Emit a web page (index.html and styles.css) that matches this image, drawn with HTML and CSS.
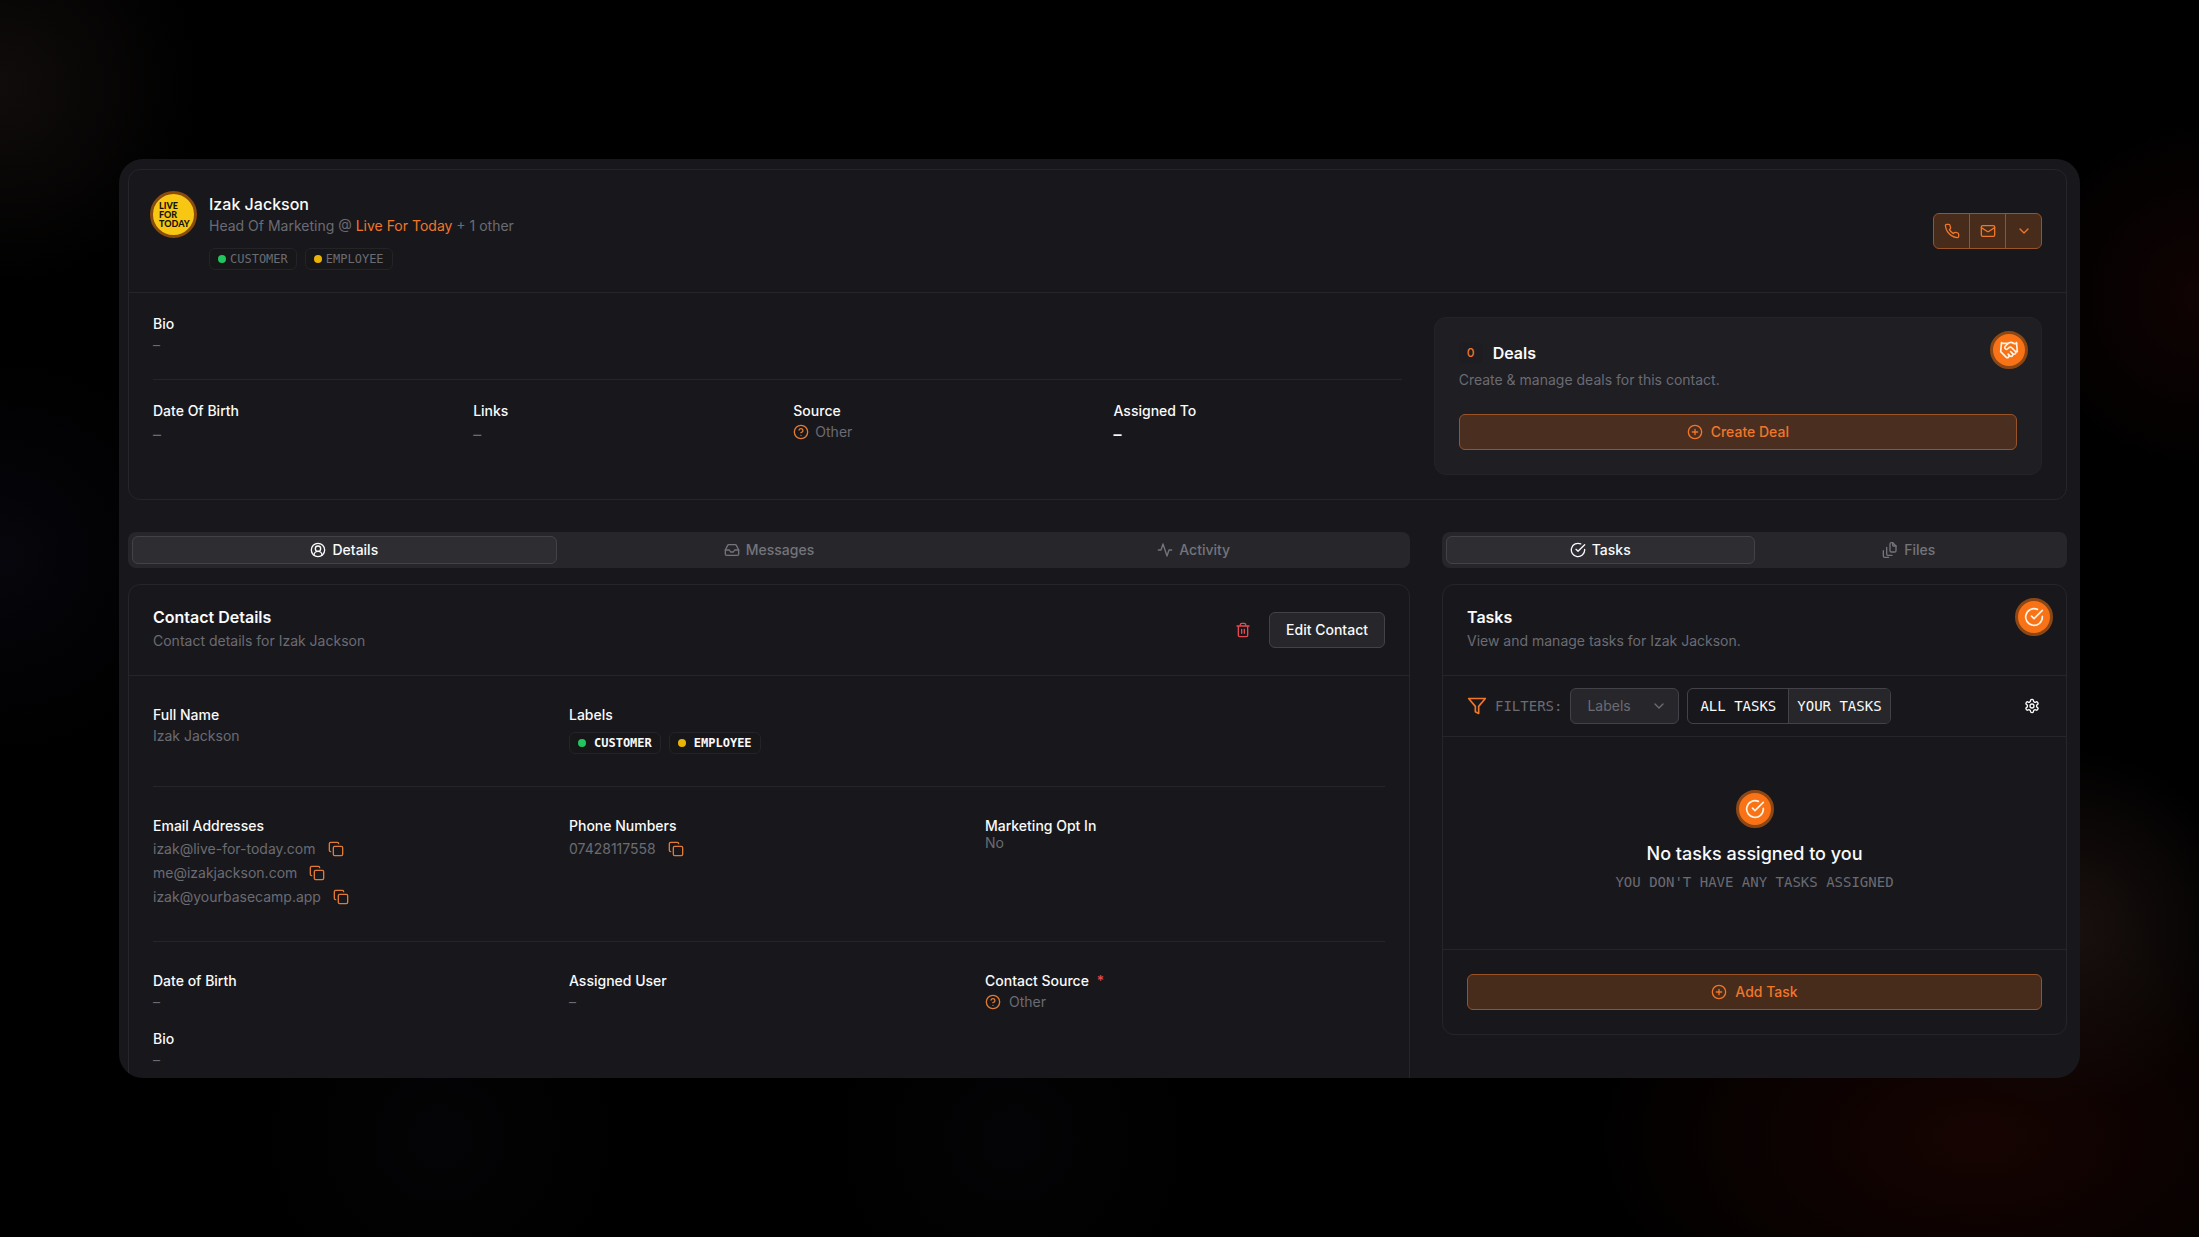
FILE: index.html
```html
<!DOCTYPE html>
<html lang="en">
<head>
    <meta charset="UTF-8">
    <meta name="viewport" content="width=device-width, initial-scale=1.0">
    <title>Izak Jackson - Contact</title>
    <link rel="stylesheet" href="styles.css">
</head>
<body>
    <!-- Icon set -->
    <svg class="sprite" aria-hidden="true">
        <symbol id="i-phone" viewBox="0 0 24 24"><path d="M22 16.92v3a2 2 0 0 1-2.18 2 19.79 19.79 0 0 1-8.63-3.07 19.5 19.5 0 0 1-6-6 19.79 19.79 0 0 1-3.07-8.67A2 2 0 0 1 4.11 2h3a2 2 0 0 1 2 1.72 12.84 12.84 0 0 0 .7 2.81 2 2 0 0 1-.45 2.11L8.09 9.91a16 16 0 0 0 6 6l1.27-1.27a2 2 0 0 1 2.11-.45 12.84 12.84 0 0 0 2.81.7A2 2 0 0 1 22 16.92z"/></symbol>
        <symbol id="i-mail" viewBox="0 0 24 24"><rect x="2" y="4" width="20" height="16" rx="2"/><path d="m22 7-8.97 5.7a1.94 1.94 0 0 1-2.06 0L2 7"/></symbol>
        <symbol id="i-chevron" viewBox="0 0 24 24"><path d="m6 9 6 6 6-6"/></symbol>
        <symbol id="i-plus" viewBox="0 0 24 24"><circle cx="12" cy="12" r="10"/><path d="M8 12h8M12 8v8"/></symbol>
        <symbol id="i-help" viewBox="0 0 24 24"><circle cx="12" cy="12" r="10"/><path d="M9.09 9a3 3 0 0 1 5.83 1c0 2-3 3-3 3M12 17h.01"/></symbol>
        <symbol id="i-copy" viewBox="0 0 24 24"><rect x="8" y="8" width="14" height="14" rx="2"/><path d="M4 16c-1.1 0-2-.9-2-2V4c0-1.1.9-2 2-2h10c1.1 0 2 .9 2 2"/></symbol>
        <symbol id="i-trash" viewBox="0 0 24 24"><path d="M3 6h18M19 6v14c0 1-1 2-2 2H7c-1 0-2-1-2-2V6M8 6V4c0-1 1-2 2-2h4c1 0 2 1 2 2v2M10 11v6M14 11v6"/></symbol>
        <symbol id="i-check" viewBox="0 0 24 24"><path d="M22 11.08V12a10 10 0 1 1-5.93-9.14"/><path d="m9 11 3 3L22 4"/></symbol>
        <symbol id="i-user" viewBox="0 0 24 24"><circle cx="12" cy="12" r="10"/><circle cx="12" cy="10" r="4"/><path d="M18 20a6 6 0 0 0-12 0"/></symbol>
        <symbol id="i-inbox" viewBox="0 0 24 24"><path d="M22 12h-6l-2 3h-4l-2-3H2"/><path d="M5.45 5.11 2 12v6a2 2 0 0 0 2 2h16a2 2 0 0 0 2-2v-6l-3.45-6.89A2 2 0 0 0 16.76 4H7.24a2 2 0 0 0-1.79 1.11z"/></symbol>
        <symbol id="i-activity" viewBox="0 0 24 24"><path d="M22 12h-4l-3 9L9 3l-3 9H2"/></symbol>
        <symbol id="i-files" viewBox="0 0 24 24"><path d="M21 6h-4a1 1 0 0 1-1-1V1"/><path d="M21 6v7a2 2 0 0 1-2 2h-5a2 2 0 0 1-2-2V3a2 2 0 0 1 2-2h2z"/><path d="M7 8v10a2 2 0 0 0 2 2h6M2 13v8a2 2 0 0 0 2 2h6"/></symbol>
        <symbol id="i-filter" viewBox="0 0 24 24"><path d="M22 3H2l8 9.46V19l4 2v-8.54z"/></symbol>
        <symbol id="i-gear" viewBox="0 0 24 24"><path d="M12.22 2h-.44a2 2 0 0 0-2 2v.18a2 2 0 0 1-1 1.73l-.43.25a2 2 0 0 1-2 0l-.15-.08a2 2 0 0 0-2.73.73l-.22.38a2 2 0 0 0 .73 2.73l.15.1a2 2 0 0 1 1 1.72v.51a2 2 0 0 1-1 1.74l-.15.09a2 2 0 0 0-.73 2.73l.22.38a2 2 0 0 0 2.73.73l.15-.08a2 2 0 0 1 2 0l.43.25a2 2 0 0 1 1 1.73V20a2 2 0 0 0 2 2h.44a2 2 0 0 0 2-2v-.18a2 2 0 0 1 1-1.73l.43-.25a2 2 0 0 1 2 0l.15.08a2 2 0 0 0 2.73-.73l.22-.39a2 2 0 0 0-.73-2.73l-.15-.08a2 2 0 0 1-1-1.74v-.5a2 2 0 0 1 1-1.74l.15-.09a2 2 0 0 0 .73-2.73l-.22-.38a2 2 0 0 0-2.73-.73l-.15.08a2 2 0 0 1-2 0l-.43-.25a2 2 0 0 1-1-1.73V4a2 2 0 0 0-2-2z"/><circle cx="12" cy="12" r="3"/></symbol>
        <symbol id="i-handshake" viewBox="0 0 24 24"><path d="m11 17 2 2a1 1 0 1 0 3-3"/><path d="m14 14 2.5 2.5a1 1 0 1 0 3-3l-3.88-3.88a3 3 0 0 0-4.24 0l-.88.88a1 1 0 1 1-3-3l2.81-2.81a5.79 5.79 0 0 1 7.06-.87l.47.28a2 2 0 0 0 1.42.25L21 4"/><path d="m21 3 1 11h-2M3 3 2 14l6.5 6.5a1 1 0 1 0 3-3M3 4h8"/></symbol>
    </svg>

    <main class="window">
        <section class="card">
            <header class="profile">
                <div class="avatar">LIVE<br>FOR<br>TODAY</div>
                <div class="profile-text">
                    <h1 class="title">Izak Jackson</h1>
                    <p class="subtitle">Head Of Marketing @ <a href="#">Live For Today</a> + 1 other</p>
                    <div class="tags tags-muted">
                        <span class="tag"><i class="dot green"></i>CUSTOMER</span>
                        <span class="tag"><i class="dot yellow"></i>EMPLOYEE</span>
                    </div>
                </div>
                <div class="button-group">
                    <button aria-label="Call"><svg class="icon"><use href="#i-phone"/></svg></button>
                    <button aria-label="Email"><svg class="icon"><use href="#i-mail"/></svg></button>
                    <button aria-label="More"><svg class="icon"><use href="#i-chevron"/></svg></button>
                </div>
            </header>
            <div class="summary columns">
                <div class="wide">
                    <div class="field">
                        <h3>Bio</h3>
                        <p>–</p>
                    </div>
                    <hr>
                    <div class="facts">
                        <div class="field"><h3>Date Of Birth</h3><p class="dash">–</p></div>
                        <div class="field"><h3>Links</h3><p class="dash">–</p></div>
                        <div class="field"><h3>Source</h3><p class="with-icon"><svg class="icon"><use href="#i-help"/></svg>Other</p></div>
                        <div class="field"><h3>Assigned To</h3><p class="dash bright">–</p></div>
                    </div>
                </div>
                <div class="deals">
                    <span class="badge"><svg class="icon"><use href="#i-handshake"/></svg></span>
                    <div class="deals-title">
                        <span class="count">0</span>
                        <h2 class="title">Deals</h2>
                    </div>
                    <p class="subtitle">Create &amp; manage deals for this contact.</p>
                    <button class="primary"><svg class="icon"><use href="#i-plus"/></svg>Create Deal</button>
                </div>
            </div>
        </section>

        <div class="columns lower">
            <div class="wide">
                <nav class="tabs">
                    <button class="tab active"><svg class="icon"><use href="#i-user"/></svg>Details</button>
                    <button class="tab"><svg class="icon"><use href="#i-inbox"/></svg>Messages</button>
                    <button class="tab"><svg class="icon"><use href="#i-activity"/></svg>Activity</button>
                </nav>
                <section class="card">
                    <header class="card-header">
                        <div>
                            <h2 class="title">Contact Details</h2>
                            <p class="subtitle">Contact details for Izak Jackson</p>
                        </div>
                        <div class="actions">
                            <button class="icon-button danger" aria-label="Delete contact"><svg class="icon"><use href="#i-trash"/></svg></button>
                            <button class="secondary">Edit Contact</button>
                        </div>
                    </header>
                    <div class="details">
                        <div class="details-row">
                            <div class="field"><h3>Full Name</h3><p>Izak Jackson</p></div>
                            <div class="field labels">
                                <h3>Labels</h3>
                                <div class="tags">
                                    <span class="tag"><i class="dot green"></i>CUSTOMER</span>
                                    <span class="tag"><i class="dot yellow"></i>EMPLOYEE</span>
                                </div>
                            </div>
                        </div>
                        <hr>
                        <div class="details-row">
                            <div class="field">
                                <h3>Email Addresses</h3>
                                <p class="copy-line">izak@live-for-today.com<button class="icon-button" aria-label="Copy email"><svg class="icon"><use href="#i-copy"/></svg></button></p>
                                <p class="copy-line">me@izakjackson.com<button class="icon-button" aria-label="Copy email"><svg class="icon"><use href="#i-copy"/></svg></button></p>
                                <p class="copy-line">izak@yourbasecamp.app<button class="icon-button" aria-label="Copy email"><svg class="icon"><use href="#i-copy"/></svg></button></p>
                            </div>
                            <div class="field">
                                <h3>Phone Numbers</h3>
                                <p class="copy-line">07428117558<button class="icon-button" aria-label="Copy phone"><svg class="icon"><use href="#i-copy"/></svg></button></p>
                            </div>
                            <div class="field tight"><h3>Marketing Opt In</h3><p>No</p></div>
                        </div>
                        <hr>
                        <div class="details-row">
                            <div class="field"><h3>Date of Birth</h3><p>–</p></div>
                            <div class="field"><h3>Assigned User</h3><p>–</p></div>
                            <div class="field source"><h3>Contact Source <span class="required">*</span></h3><p class="with-icon"><svg class="icon"><use href="#i-help"/></svg>Other</p></div>
                            <div class="field"><h3>Bio</h3><p>–</p></div>
                        </div>
                    </div>
                </section>
            </div>

            <aside>
                <nav class="tabs">
                    <button class="tab active"><svg class="icon"><use href="#i-check"/></svg>Tasks</button>
                    <button class="tab"><svg class="icon"><use href="#i-files"/></svg>Files</button>
                </nav>
                <section class="card tasks">
                    <span class="badge"><svg class="icon"><use href="#i-check"/></svg></span>
                    <header class="card-header">
                        <div>
                            <h2 class="title">Tasks</h2>
                            <p class="subtitle">View and manage tasks for Izak Jackson.</p>
                        </div>
                    </header>
                    <div class="filters">
                        <svg class="icon funnel"><use href="#i-filter"/></svg>
                        <label for="labelFilter">FILTERS:</label>
                        <div class="select">
                            <select id="labelFilter"><option>Labels</option></select>
                            <svg class="icon"><use href="#i-chevron"/></svg>
                        </div>
                        <div class="toggle">
                            <button>ALL TASKS</button>
                            <button class="active">YOUR TASKS</button>
                        </div>
                        <button class="icon-button settings" aria-label="Task settings"><svg class="icon"><use href="#i-gear"/></svg></button>
                    </div>
                    <div class="empty">
                        <span class="badge"><svg class="icon"><use href="#i-check"/></svg></span>
                        <h3>No tasks assigned to you</h3>
                        <p>YOU DON'T HAVE ANY TASKS ASSIGNED</p>
                    </div>
                    <footer class="card-footer">
                        <button class="primary"><svg class="icon"><use href="#i-plus"/></svg>Add Task</button>
                    </footer>
                </section>
            </aside>
        </div>
    </main>
</body>
</html>
```
FILE: styles.css
```css
* {
    box-sizing: border-box;
}
body {
    margin: 0;
    height: 100vh;
    padding: 159px 119px;
    font-family: Inter, "Liberation Sans", sans-serif;
    font-size: 14px;
    line-height: 20px;
    color: #fafafa;
    background:
        radial-gradient(circle at 0 7%, #100c0b, transparent 200px),
        radial-gradient(circle at 0 45%, #06060c, transparent 200px),
        radial-gradient(circle at 100% 24%, #100303, transparent 180px),
        radial-gradient(circle at 94% 75%, #1a110f, transparent 180px),
        radial-gradient(ellipse at 90% 92%, #160402, transparent 400px),
        radial-gradient(circle at 20% 92%, #040406, transparent 180px),
        radial-gradient(circle at 46% 92%, #040406, transparent 180px),
        #000;
}
h1, h2, h3, p {
    margin: 0;
}
hr {
    height: 1px;
    margin: 24px 0;
    border: 0;
    background: #26262a;
}
a {
    color: #f0762a;
    text-decoration: none;
}
button, select {
    font: inherit;
    color: inherit;
    cursor: pointer;
}
button {
    display: flex;
    align-items: center;
    justify-content: center;
    padding: 0;
    border: 0;
    background: none;
}
.sprite {
    display: none;
}
.icon {
    flex: none;
    width: 16px;
    height: 16px;
    fill: none;
    stroke: currentColor;
    stroke-width: 2;
    stroke-linecap: round;
    stroke-linejoin: round;
}
.window {
    height: 100%;
    padding: 10px 13px 0 9px;
    overflow: hidden;
    background: #18181c;
    border-radius: 24px;
}
.card {
    position: relative;
    border: 1px solid #26262a;
    border-radius: 12px;
}
.columns {
    display: grid;
    grid-template-columns: repeat(3, 1fr);
    column-gap: 32px;
}
.wide {
    grid-column: span 2;
}
.title {
    font-size: 16px;
    line-height: 16px;
    font-weight: 600;
}
.subtitle {
    margin-top: 6px;
    color: #6b6b73;
}

/* Profile card */
.profile {
    display: flex;
    align-items: flex-start;
    gap: 12px;
    padding: 21px 24px 22px 21px;
    border-bottom: 1px solid #26262a;
}
.avatar {
    width: 47px;
    height: 47px;
    padding: 7px 0 0 6px;
    border: 3px solid #8a4b0c;
    border-radius: 50%;
    background: #f8c713;
    color: #15120a;
    font-family: Lato, sans-serif;
    font-size: 9px;
    line-height: 9px;
    font-weight: 900;
}
.profile-text {
    flex: 1;
    padding-top: 5px;
}
.profile-text .title {
    font-weight: 500;
}
.profile-text .subtitle {
    margin-top: 4px;
}
.tags {
    display: flex;
    gap: 8px;
}
.tags-muted {
    margin-top: 12px;
    color: #6b6b73;
}
.tag {
    display: flex;
    align-items: center;
    gap: 8px;
    height: 22px;
    padding: 0 8px;
    border: 1px solid #242428;
    border-radius: 6px;
    background: #17171a;
    font-family: "DejaVu Sans Mono", monospace;
    font-size: 12px;
    font-weight: bold;
}
.tags-muted .tag {
    gap: 4px;
    font-weight: normal;
}
.dot {
    width: 8px;
    height: 8px;
    border-radius: 50%;
}
.green {
    background: #22c55e;
}
.yellow {
    background: #eab308;
}
.button-group {
    display: flex;
    align-self: center;
    border: 1px solid #9a5327;
    border-radius: 6px;
    background: #472b1b;
    color: #f0762a;
}
.button-group button {
    width: 35px;
    height: 34px;
}
.button-group button + button {
    width: 36px;
    border-left: 1px solid #9a5327;
}
.summary {
    padding: 24px;
}
.facts {
    display: grid;
    grid-template-columns: repeat(4, 1fr);
    gap: 32px;
}
.field h3 {
    margin-bottom: 4px;
    font-size: 14px;
    line-height: 14px;
    font-weight: 500;
}
.field p {
    color: #6b6b73;
}
.field .dash {
    font-size: 16px;
    line-height: 24px;
}
.field .bright {
    color: #fafafa;
    font-weight: 600;
}
.with-icon {
    display: flex;
    align-items: center;
    gap: 6px;
}
.source .with-icon {
    gap: 8px;
}
.with-icon .icon {
    color: #e07a35;
}

/* Deals */
.deals {
    position: relative;
    padding: 24px;
    border: 1px solid #242428;
    border-radius: 12px;
    background: #1e1e23;
}
.deals-title {
    display: flex;
    align-items: center;
    gap: 10px;
}
.count {
    width: 24px;
    height: 22px;
    border-radius: 6px;
    background: #1c1c21;
    color: #f0762a;
    font-size: 12px;
    line-height: 22px;
    font-weight: 500;
    text-align: center;
}
.badge {
    display: grid;
    place-items: center;
    width: 38px;
    height: 38px;
    border: 3px solid #8d4715;
    border-radius: 50%;
    background: #f97316;
    color: #fff3e6;
}
.badge .icon {
    width: 20px;
    height: 20px;
}
.card > .badge, .deals > .badge {
    position: absolute;
    top: 13px;
    right: 13px;
}
.primary {
    width: 100%;
    height: 36px;
    gap: 8px;
    border: 1px solid #9a5327;
    border-radius: 6px;
    background: #472b1b;
    color: #f0762a;
    font-weight: 500;
}
.deals .primary {
    margin-top: 24px;
    background: #4a2f20;
}

/* Tabs */
.lower {
    align-items: start;
    margin-top: 32px;
}
.tabs {
    display: flex;
    height: 36px;
    margin-bottom: 16px;
    padding: 4px;
    border-radius: 8px;
    background: #27272b;
}
.tab {
    flex: 1;
    gap: 6px;
    border: 1px solid transparent;
    border-radius: 6px;
    color: #74747c;
    font-weight: 500;
}
.tab.active {
    border-color: #424248;
    background: #2e2e32;
    color: #fafafa;
}

/* Contact details */
.card-header {
    display: flex;
    align-items: center;
    justify-content: space-between;
    padding: 24px;
    border-bottom: 1px solid #26262a;
}
.actions {
    display: flex;
    align-items: center;
    gap: 18px;
}
.icon-button {
    color: #e07a35;
}
.danger {
    color: #e5484d;
}
.secondary {
    height: 36px;
    padding: 0 16px;
    border: 1px solid #424248;
    border-radius: 6px;
    background: #27272b;
    font-weight: 500;
}
.details {
    padding: 32px 24px;
}
.details hr {
    margin: 32px 0;
}
.details-row {
    display: grid;
    grid-template-columns: repeat(3, 1fr);
    gap: 20px 16px;
}
.labels h3 {
    margin-bottom: 10px;
}
.tight h3 {
    margin-bottom: 0;
}
.copy-line {
    display: flex;
    align-items: center;
    gap: 12px;
    line-height: 24px;
}
.required {
    margin-left: 4px;
    color: #e5484d;
}

/* Tasks */
.filters {
    display: flex;
    align-items: center;
    gap: 8px;
    padding: 12px 24px;
    border-bottom: 1px solid #26262a;
}
.filters label, .toggle, .empty p {
    font-family: "DejaVu Sans Mono", monospace;
}
.filters label {
    color: #6b6b73;
}
.funnel {
    width: 20px;
    height: 20px;
    color: #f0762a;
}
.select {
    position: relative;
    width: 109px;
    color: #6b6b73;
}
.select select {
    width: 100%;
    height: 36px;
    padding: 0 16px;
    appearance: none;
    border: 1px solid #424248;
    border-radius: 6px;
    background: #27272b;
}
.select .icon {
    position: absolute;
    top: 10px;
    right: 12px;
    pointer-events: none;
}
.toggle {
    display: flex;
    height: 36px;
    border: 1px solid #424248;
    border-radius: 6px;
    overflow: hidden;
}
.toggle button {
    padding: 0 12px;
}
.toggle .active {
    padding: 0 8px;
    border-left: 1px solid #424248;
    background: #27272b;
}
.settings {
    width: 20px;
    height: 20px;
    margin-left: auto;
    color: #fafafa;
}
.empty {
    display: flex;
    flex-direction: column;
    align-items: center;
    padding: 53px 24px 57px;
}
.empty h3 {
    margin: 14px 0 6px;
    font-size: 18px;
    line-height: 24px;
    font-weight: 500;
}
.empty p {
    color: #6b6b73;
}
.card-footer {
    padding: 24px;
    border-top: 1px solid #26262a;
}
```
